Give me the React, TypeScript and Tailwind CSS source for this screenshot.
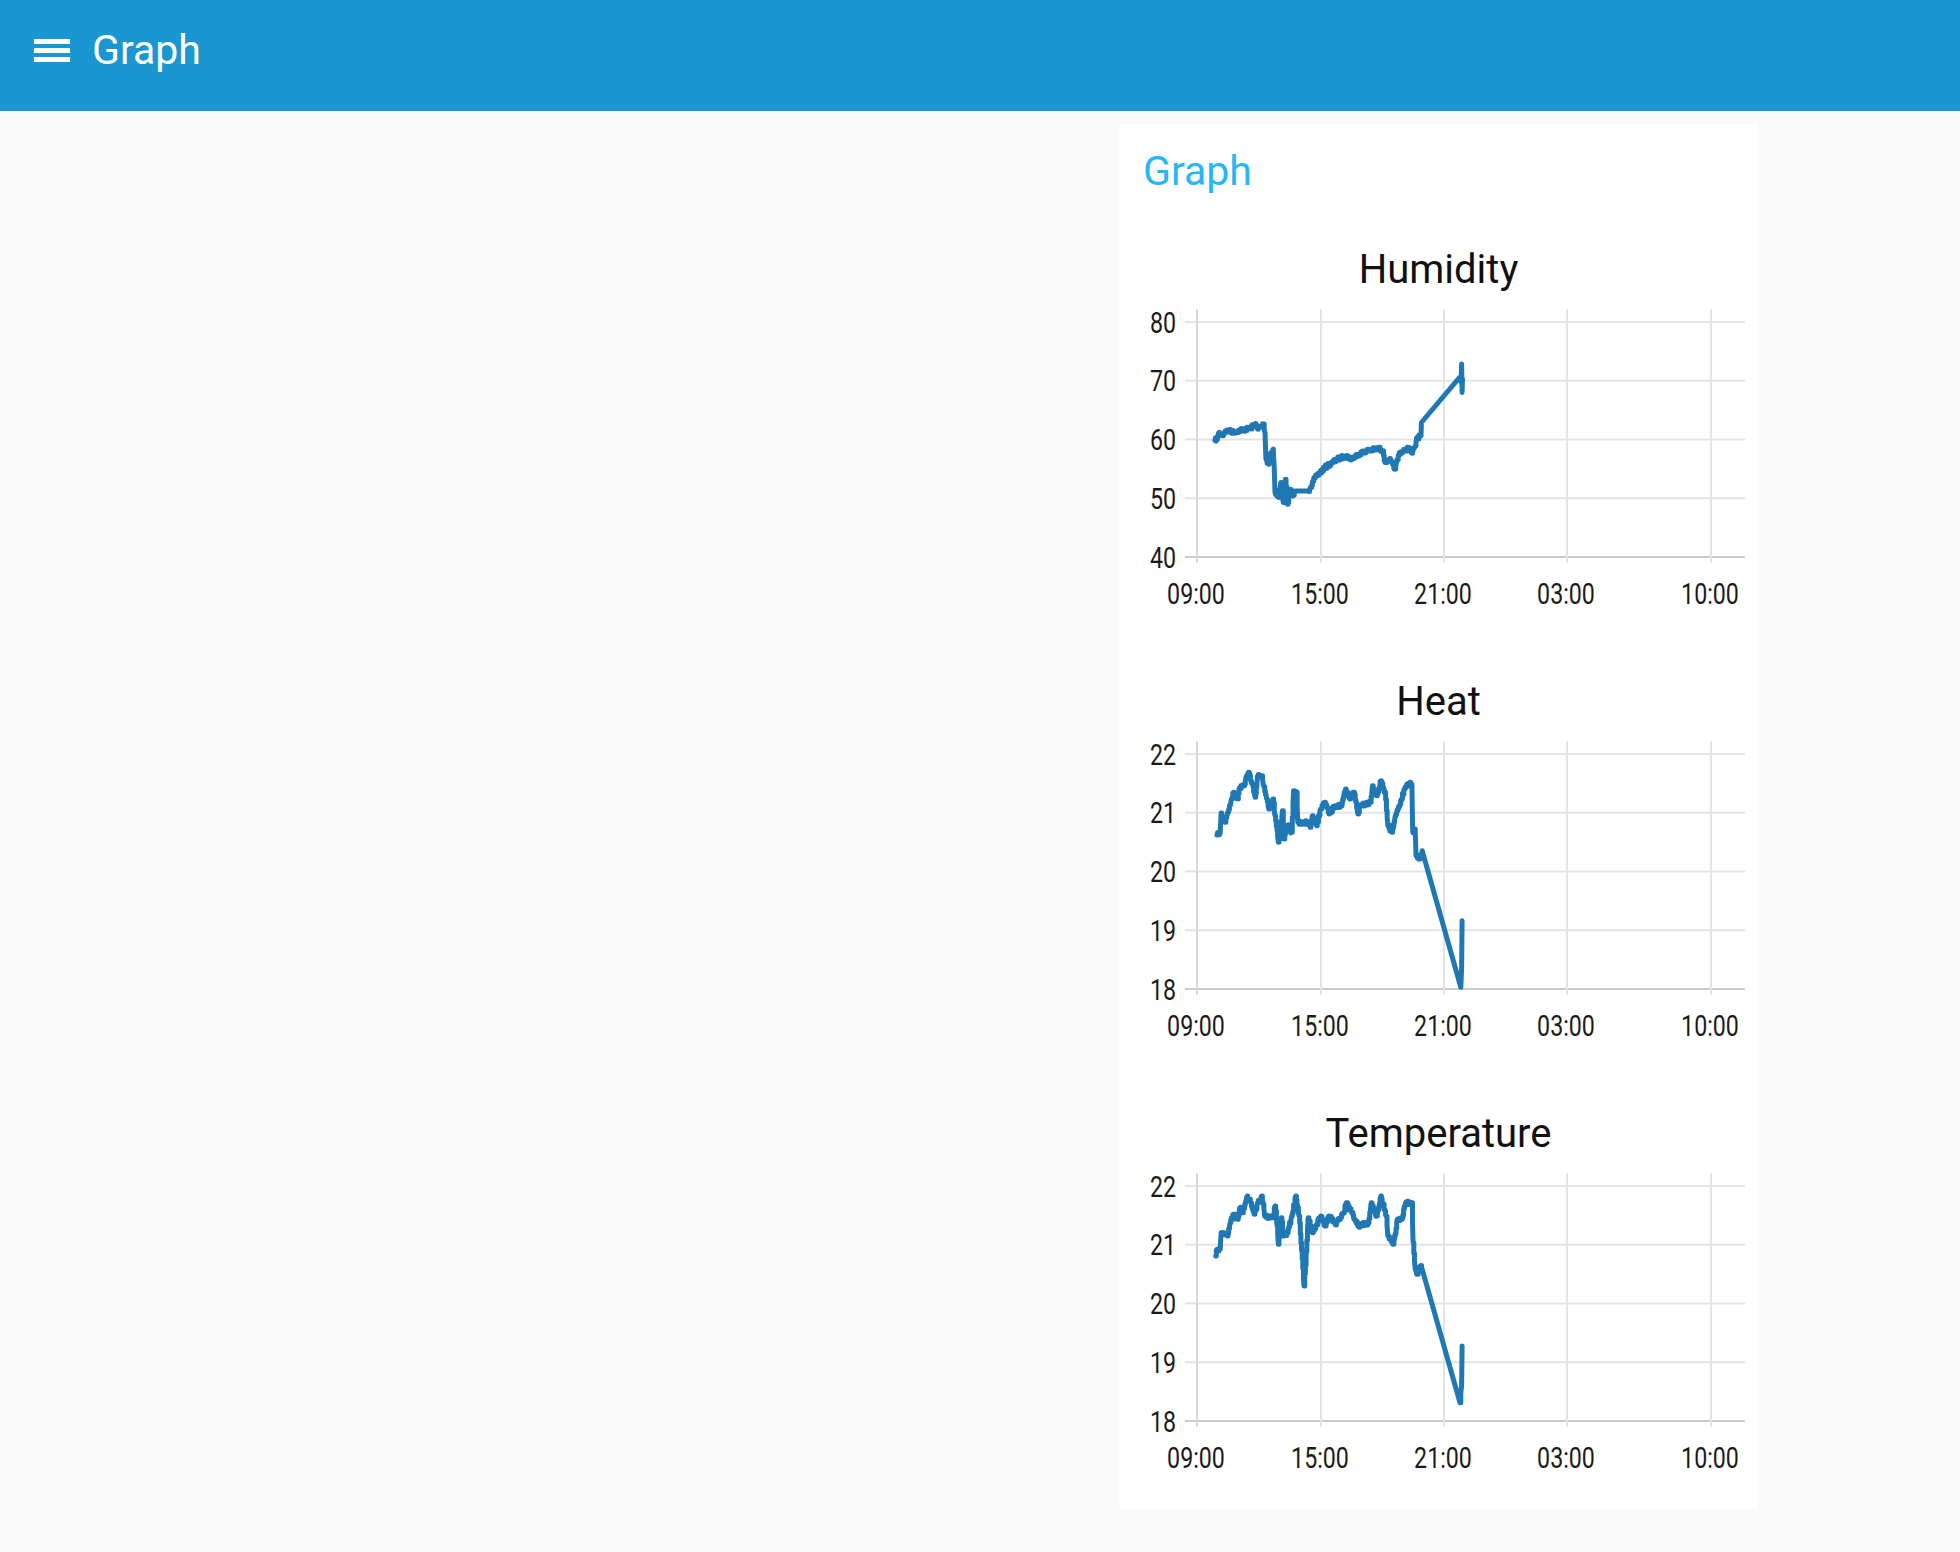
import React from 'react';

type P = [number, number];

// pseudo random, so the noisy line looks the same every run
const rng = (seed: number) => {
  let s = seed;
  return () => {
    s = (s * 16807) % 2147483647;
    return s / 2147483647;
  };
};

// points are traced in "zoom" units: x 212 = 09:00, 805 = 21:00; y mapped by y0 (top line) / y1 (bottom line)
const buildLine = (pts: P[], y0: number, y1: number, seed: number, amp: number) => {
  const r = rng(seed);
  const out: P[] = [];
  for (let i = 0; i < pts.length; i++) {
    const [x, y] = pts[i];
    out.push([x, y]);
    const n = pts[i + 1];
    if (!n) break;
    const dx = n[0] - x;
    if (dx > 2 && dx <= 30) {
      const steps = Math.floor(dx / 1.5);
      let prev = y;
      for (let k = 1; k < steps; k++) {
        const t = k / steps;
        const v = y + (n[1] - y) * t + (r() - 0.5) * amp;
        // small stair steps like sampled sensor data
        out.push([x + dx * t, prev]);
        out.push([x + dx * t, v]);
        prev = v;
      }
    }
  }
  const sx = (zx: number) => 78 + (zx - 212) * 0.4148;
  const sy = (zy: number) => 29 + ((zy - y0) * 235) / (y1 - y0);
  return out.map(([a, b]) => `${sx(a).toFixed(1)},${sy(b).toFixed(1)}`).join(' ');
};

const humidity: P[] = [
  [255, 453], [260, 450], [265, 430], [272, 440], [280, 425], [300, 428], [320, 422], [340, 418],
  [352, 403], [358, 420], [366, 412], [372, 405], [376, 430], [378, 510], [384, 525], [390, 490],
  [396, 480], [398, 535], [400, 610], [408, 625], [414, 580], [420, 640], [425, 570], [430, 645],
  [436, 600], [442, 620], [448, 605], [480, 605], [485, 595], [492, 575], [500, 560], [520, 535],
  [550, 510], [570, 500], [585, 510], [600, 495], [620, 485], [650, 478], [660, 485], [665, 520],
  [675, 510], [688, 540], [700, 490], [712, 485], [722, 475], [730, 492], [738, 470], [742, 445],
  [752, 440], [753, 400], [845, 265], [849, 280], [850, 225], [851, 310], [852, 270],
];

const heat: P[] = [
  [260, 528], [268, 520], [270, 462], [280, 490], [285, 462], [295, 420], [300, 400], [310, 420],
  [315, 385], [325, 380], [330, 355], [336, 340], [345, 375], [352, 415], [358, 350], [368, 350],
  [372, 380], [380, 420], [385, 450], [395, 420], [400, 470], [408, 550], [418, 455], [422, 540],
  [430, 500], [440, 520], [445, 395], [452, 400], [455, 490], [480, 490], [485, 505], [490, 470],
  [500, 500], [510, 450], [520, 430], [530, 465], [545, 440], [560, 440], [570, 390], [580, 420],
  [590, 400], [600, 465], [605, 440], [630, 430], [635, 380], [645, 410], [655, 365], [665, 400],
  [672, 500], [682, 520], [690, 470], [700, 440], [712, 390], [718, 375], [730, 375], [732, 520],
  [738, 510], [740, 590], [748, 600], [755, 575], [848, 985], [850, 930], [851, 785],
];

const temperature: P[] = [
  [257, 500], [260, 480], [268, 480], [270, 430], [285, 440], [292, 400], [300, 375], [310, 390],
  [315, 355], [322, 370], [333, 320], [342, 340], [350, 375], [358, 340], [368, 320], [375, 380],
  [395, 385], [400, 350], [405, 410], [408, 465], [415, 385], [420, 440], [430, 430], [440, 380],
  [450, 320], [458, 380], [470, 590], [480, 385], [490, 430], [500, 405], [510, 380], [520, 410],
  [530, 380], [545, 405], [565, 370], [572, 340], [585, 370], [600, 410], [625, 400], [632, 340],
  [645, 380], [655, 320], [668, 380], [672, 440], [685, 465], [695, 390], [705, 390], [715, 340],
  [730, 340], [733, 460], [738, 540], [742, 555], [750, 530], [755, 540], [846, 940], [850, 890],
  [851, 770],
];

const GRID_Y = [29, 87.75, 146.5, 205.25, 264];
const GRID_X = [78, 202, 325, 448, 592];
const X_LABELS = [
  { x: 77, l: '09:00' },
  { x: 201, l: '15:00' },
  { x: 324, l: '21:00' },
  { x: 447, l: '03:00' },
  { x: 591, l: '10:00' },
];

interface ChartProps {
  title: string;
  yLabels: string[];
  points: string;
  first?: boolean;
}

const Chart: React.FC<ChartProps> = ({ title, yLabels, points, first }) => (
  <div className={first ? 'mt-[54px]' : 'mt-[56px]'}>
    <div className="text-center text-[40px] leading-[46px] text-[#111111]">{title}</div>
    <svg width={639} height={330} className="block">
      {GRID_Y.map((y, i) => (
        <line
          key={y}
          x1={66}
          x2={626}
          y1={y}
          y2={y}
          stroke={i === GRID_Y.length - 1 ? '#cccccc' : '#e4e4e4'}
          strokeWidth={2}
        />
      ))}
      {GRID_X.map((x, i) => (
        <line key={x} x1={x} x2={x} y1={16} y2={270} stroke={i === 0 ? '#d8d8d8' : '#e4e4e4'} strokeWidth={2} />
      ))}
      {yLabels.map((l, i) => (
        <text
          key={l}
          transform={`translate(57 ${GRID_Y[i] + 10.5}) scale(0.8 1)`}
          textAnchor="end"
          fontSize={29}
          fill="#1a1a1a"
          fontFamily="Roboto, sans-serif"
        >
          {l}
        </text>
      ))}
      {X_LABELS.map((t) => (
        <text
          key={t.l}
          transform={`translate(${t.x} 311) scale(0.8 1)`}
          textAnchor="middle"
          fontSize={29}
          fill="#1a1a1a"
          fontFamily="Roboto, sans-serif"
        >
          {t.l}
        </text>
      ))}
      <polyline
        points={points}
        fill="none"
        stroke="#1f77b4"
        strokeWidth={5}
        strokeLinejoin="round"
        strokeLinecap="round"
      />
    </svg>
  </div>
);

const App: React.FC = () => {
  const humidityLine = buildLine(humidity, 99, 803, 7, 12);
  const heatLine = buildLine(heat, 285, 990, 13, 12);
  const tempLine = buildLine(temperature, 290, 995, 29, 12);

  return (
    <div className="min-h-screen bg-[#fafafa] font-['Roboto',sans-serif]">
      {/* Toolbar */}
      <header className="h-[111px] bg-[#1a96d0] flex items-center pb-[11px] pl-[34px]">
        <div className="flex flex-col gap-[4px]">
          <span className="block w-[36px] h-[5px] bg-white" />
          <span className="block w-[36px] h-[5px] bg-white" />
          <span className="block w-[36px] h-[5px] bg-white" />
        </div>
        <h1 className="ml-[22px] text-[41px] leading-[40px] text-white">Graph</h1>
      </header>

      <main className="pt-[13px] pl-[1119px]">
        <section className="w-[639px] bg-white pt-[25px] pb-[22px]">
          <h2 className="pl-[24px] text-[41px] leading-[44px] text-[#29b6f6]">Graph</h2>
          <Chart title="Humidity" yLabels={['80', '70', '60', '50', '40']} points={humidityLine} first />
          <Chart title="Heat" yLabels={['22', '21', '20', '19', '18']} points={heatLine} />
          <Chart title="Temperature" yLabels={['22', '21', '20', '19', '18']} points={tempLine} />
        </section>
      </main>
    </div>
  );
};

export default App;
